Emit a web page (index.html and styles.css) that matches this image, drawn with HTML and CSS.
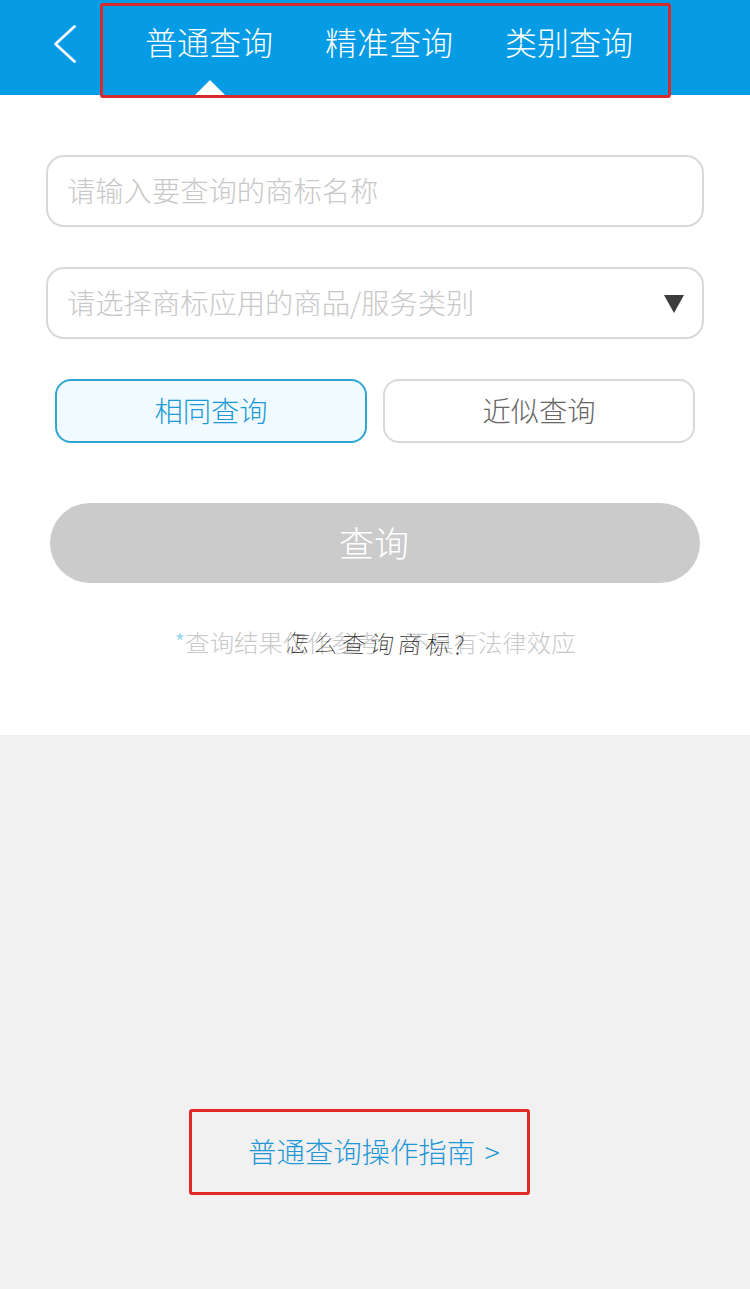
FILE: index.html
```html
<!DOCTYPE html>
<html lang="zh-CN">
<head>
<meta charset="utf-8">
<title>商标查询</title>
<link rel="stylesheet" href="styles.css">
</head>
<body>
<header class="topbar">
  <svg class="back" width="24" height="38" viewBox="0 0 24 38"><path d="M21.5 1.5 L2.5 19 L21.5 36.5" fill="none" stroke="#fff" stroke-width="2.7" stroke-linecap="round" stroke-linejoin="round"/></svg>
  <nav class="tabs">
    <span class="tab active">普通查询</span>
    <span class="tab">精准查询</span>
    <span class="tab">类别查询</span>
  </nav>
  <div class="mark-tabs"></div>
</header>
<main class="form">
  <div class="field">请输入要查询的商标名称</div>
  <div class="field select">请选择商标应用的商品/服务类别<span class="arrow"></span></div>
  <div class="modes">
    <div class="mode on">相同查询</div>
    <div class="mode">近似查询</div>
  </div>
  <div class="submit">查询</div>
  <p class="note"><span class="star">*</span>查询结果仅作参考，不具有法律效应<span class="scrawl">怎么查询商标?</span></p>
</main>
<section class="foot">
  <div class="guide">普通查询操作指南 &gt;</div>
</section>
</body>
</html>
```
FILE: styles.css
```css
* { box-sizing: border-box; }
html, body { margin: 0; padding: 0; }
body {
  width: 750px;
  height: 1289px;
  overflow: hidden;
  background: #f1f1f1;
  font-family: "Noto Sans CJK SC", "Noto Sans", sans-serif;
  font-weight: 300;
}
.topbar {
  position: relative;
  height: 95px;
  background: #069be5;
  display: flex;
  align-items: flex-start;
}
.back { margin: 25px 0 0 53px; flex: none; }
.tabs {
  display: flex;
  gap: 52px;
  margin-left: 68px;
  padding-top: 18px;
}
.tab {
  position: relative;
  color: #fff;
  font-size: 32px;
  line-height: 46px;
}
.tab.active::after {
  content: "";
  position: absolute;
  left: 50px;
  top: 62px;
  border-left: 15px solid transparent;
  border-right: 15px solid transparent;
  border-bottom: 15px solid #fff;
}
.mark-tabs {
  position: absolute;
  left: 100px;
  top: 3px;
  width: 571px;
  height: 95px;
  border: 3px solid #d62b2b;
  border-radius: 3px;
}
.form {
  background: #fff;
  height: 640px;
  padding: 60px 46px 0;
}
.field {
  position: relative;
  height: 72px;
  border: 2px solid #d9d9d9;
  border-radius: 18px;
  margin-bottom: 40px;
  padding-left: 19px;
  font-size: 28.3px;
  line-height: 66px;
  color: #c8c8c8;
}
.arrow {
  position: absolute;
  right: 18px;
  top: 26px;
  border-left: 10px solid transparent;
  border-right: 10px solid transparent;
  border-top: 18px solid #3c3c3c;
}
.modes {
  display: flex;
  gap: 16px;
  margin: 0 9px;
}
.mode {
  flex: 1;
  height: 64px;
  border: 2px solid #d9d9d9;
  border-radius: 16px;
  text-align: center;
  font-size: 28.3px;
  line-height: 58px;
  color: #666;
}
.mode.on {
  border-color: #2fa5d2;
  background: #f1fafe;
  color: #1b9ad6;
}
.submit {
  height: 80px;
  margin: 60px 4px 0;
  border-radius: 40px;
  background: #cbcbcb;
  color: #fff;
  text-align: center;
  font-size: 35px;
  line-height: 77px;
  text-indent: -2px;
}
.note {
  position: relative;
  margin: 42px -46px 0;
  text-align: center;
  font-size: 24.4px;
  line-height: 34px;
  color: #c9c9c9;
}
.star { color: #8fd3ee; }
.scrawl {
  position: absolute;
  left: 286px;
  top: 2px;
  font-weight: 100;
  font-size: 24px;
  line-height: 32px;
  letter-spacing: 4px;
  color: #111;
  white-space: nowrap;
  transform: skewX(-6deg) rotate(1deg);
}
.foot {
  height: 554px;
  padding-top: 374px;
  padding-left: 189px;
}
.guide {
  width: 341px;
  height: 86px;
  border: 3px solid #e02a26;
  border-radius: 3px;
  padding-left: 56px;
  font-size: 28.4px;
  word-spacing: 3px;
  line-height: 77px;
  color: #1f97d6;
  white-space: nowrap;
}
```
